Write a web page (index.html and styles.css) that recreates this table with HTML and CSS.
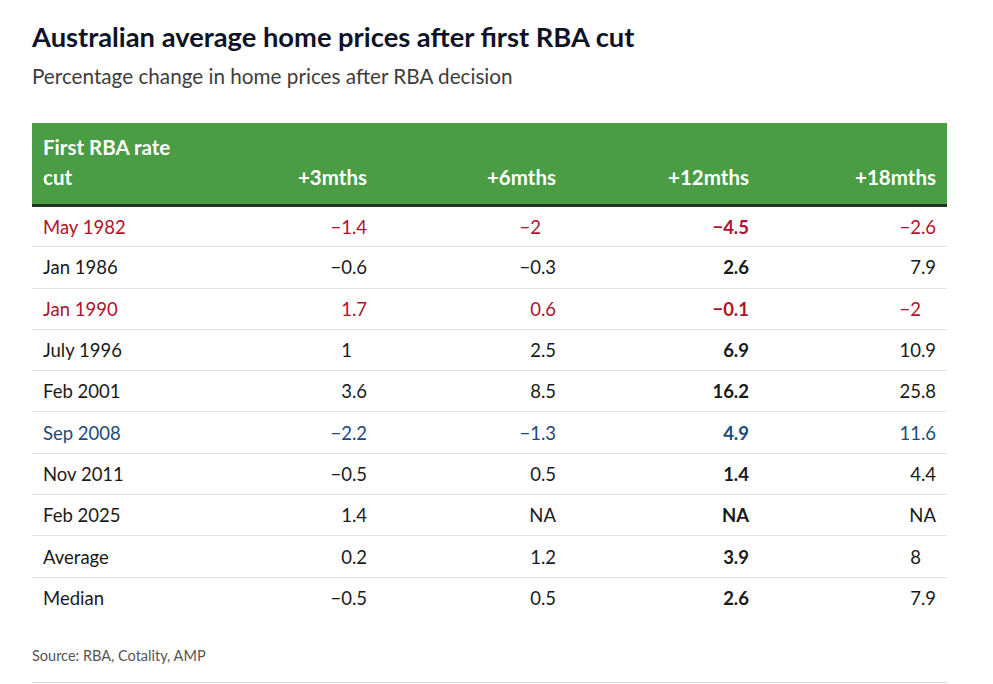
FILE: index.html
```html
<!DOCTYPE html>
<html lang="en">
<head>
<meta charset="utf-8">
<title>Australian average home prices after first RBA cut</title>
<link rel="stylesheet" href="styles.css">
</head>
<body>
<div class="chart">
  <h1 class="title">Australian average home prices after first RBA cut</h1>
  <p class="subtitle">Percentage change in home prices after RBA decision</p>
  <table class="data">
    <colgroup>
      <col class="c1"><col class="c2"><col class="c3"><col class="c4"><col class="c5">
    </colgroup>
    <thead>
      <tr>
        <th class="lbl">First RBA rate<br>cut</th>
        <th>+3mths</th>
        <th>+6mths</th>
        <th>+12mths</th>
        <th>+18mths</th>
      </tr>
    </thead>
    <tbody>
      <tr class="red"><td class="lbl">May 1982</td><td>−1.4</td><td class="int">−2</td><td class="b">−4.5</td><td>−2.6</td></tr>
      <tr><td class="lbl">Jan 1986</td><td>−0.6</td><td>−0.3</td><td class="b">2.6</td><td>7.9</td></tr>
      <tr class="red"><td class="lbl">Jan 1990</td><td>1.7</td><td>0.6</td><td class="b">−0.1</td><td class="int">−2</td></tr>
      <tr><td class="lbl">July 1996</td><td class="int">1</td><td>2.5</td><td class="b">6.9</td><td>10.9</td></tr>
      <tr><td class="lbl">Feb 2001</td><td>3.6</td><td>8.5</td><td class="b">16.2</td><td>25.8</td></tr>
      <tr class="blue"><td class="lbl">Sep 2008</td><td>−2.2</td><td>−1.3</td><td class="b">4.9</td><td>11.6</td></tr>
      <tr><td class="lbl">Nov 2011</td><td>−0.5</td><td>0.5</td><td class="b">1.4</td><td>4.4</td></tr>
      <tr><td class="lbl">Feb 2025</td><td>1.4</td><td>NA</td><td class="b">NA</td><td>NA</td></tr>
      <tr><td class="lbl">Average</td><td>0.2</td><td>1.2</td><td class="b">3.9</td><td class="int">8</td></tr>
      <tr class="last"><td class="lbl">Median</td><td>−0.5</td><td>0.5</td><td class="b">2.6</td><td>7.9</td></tr>
    </tbody>
  </table>
  <p class="source">Source: RBA, Cotality, AMP</p>
  <div class="rule"></div>
</div>
</body>
</html>
```

FILE: styles.css
```css
html, body {
  margin: 0;
  padding: 0;
  background: #ffffff;
}
body {
  font-family: "Lato", "Open Sans", sans-serif;
  color: #1a1a1a;
}
.chart {
  width: 915px;
  padding: 20px 0 0 32px;
}
.title {
  margin: 0;
  font-size: 27.3px;
  line-height: 34px;
  font-weight: 700;
  color: #0e1326;
}
.subtitle {
  margin: 9px 0 0;
  font-size: 20.7px;
  line-height: 26px;
  color: #3d3d3d;
}
.data {
  margin-top: 34px;
  width: 915px;
  border-collapse: collapse;
  table-layout: fixed;
  font-size: 18.5px;
}
.c1 { width: 168px; }
.c2 { width: 178px; }
.c3 { width: 189px; }
.c4 { width: 193px; }
.c5 { width: 187px; }
.data thead th {
  background: #4a9c45;
  color: #ffffff;
  font-weight: 700;
  font-size: 20.5px;
  line-height: 30px;
  text-align: right;
  vertical-align: bottom;
  padding: 9px 11px 12px 11px;
  border-bottom: 3px solid #22331f;
  white-space: nowrap;
}
.data th.lbl {
  text-align: left;
}
.data td {
  height: 41.3px;
  box-sizing: border-box;
  padding: 0 11px;
  text-align: right;
  border-bottom: 1px solid #e2e2e2;
  vertical-align: middle;
}
.data td.lbl {
  text-align: left;
}
.data td.b {
  font-weight: 700;
}
.data td.int {
  padding-right: 26px;
}
.data tr.red td { color: #b0122d; }
.data tr.blue td { color: #1d4a7a; }
.data tr.last td { border-bottom: none; }
.source {
  margin: 28px 0 0;
  font-size: 14.5px;
  line-height: 20px;
  color: #555555;
}
.rule {
  margin-top: 16px;
  height: 1px;
  background: #d9d9d9;
}
```
